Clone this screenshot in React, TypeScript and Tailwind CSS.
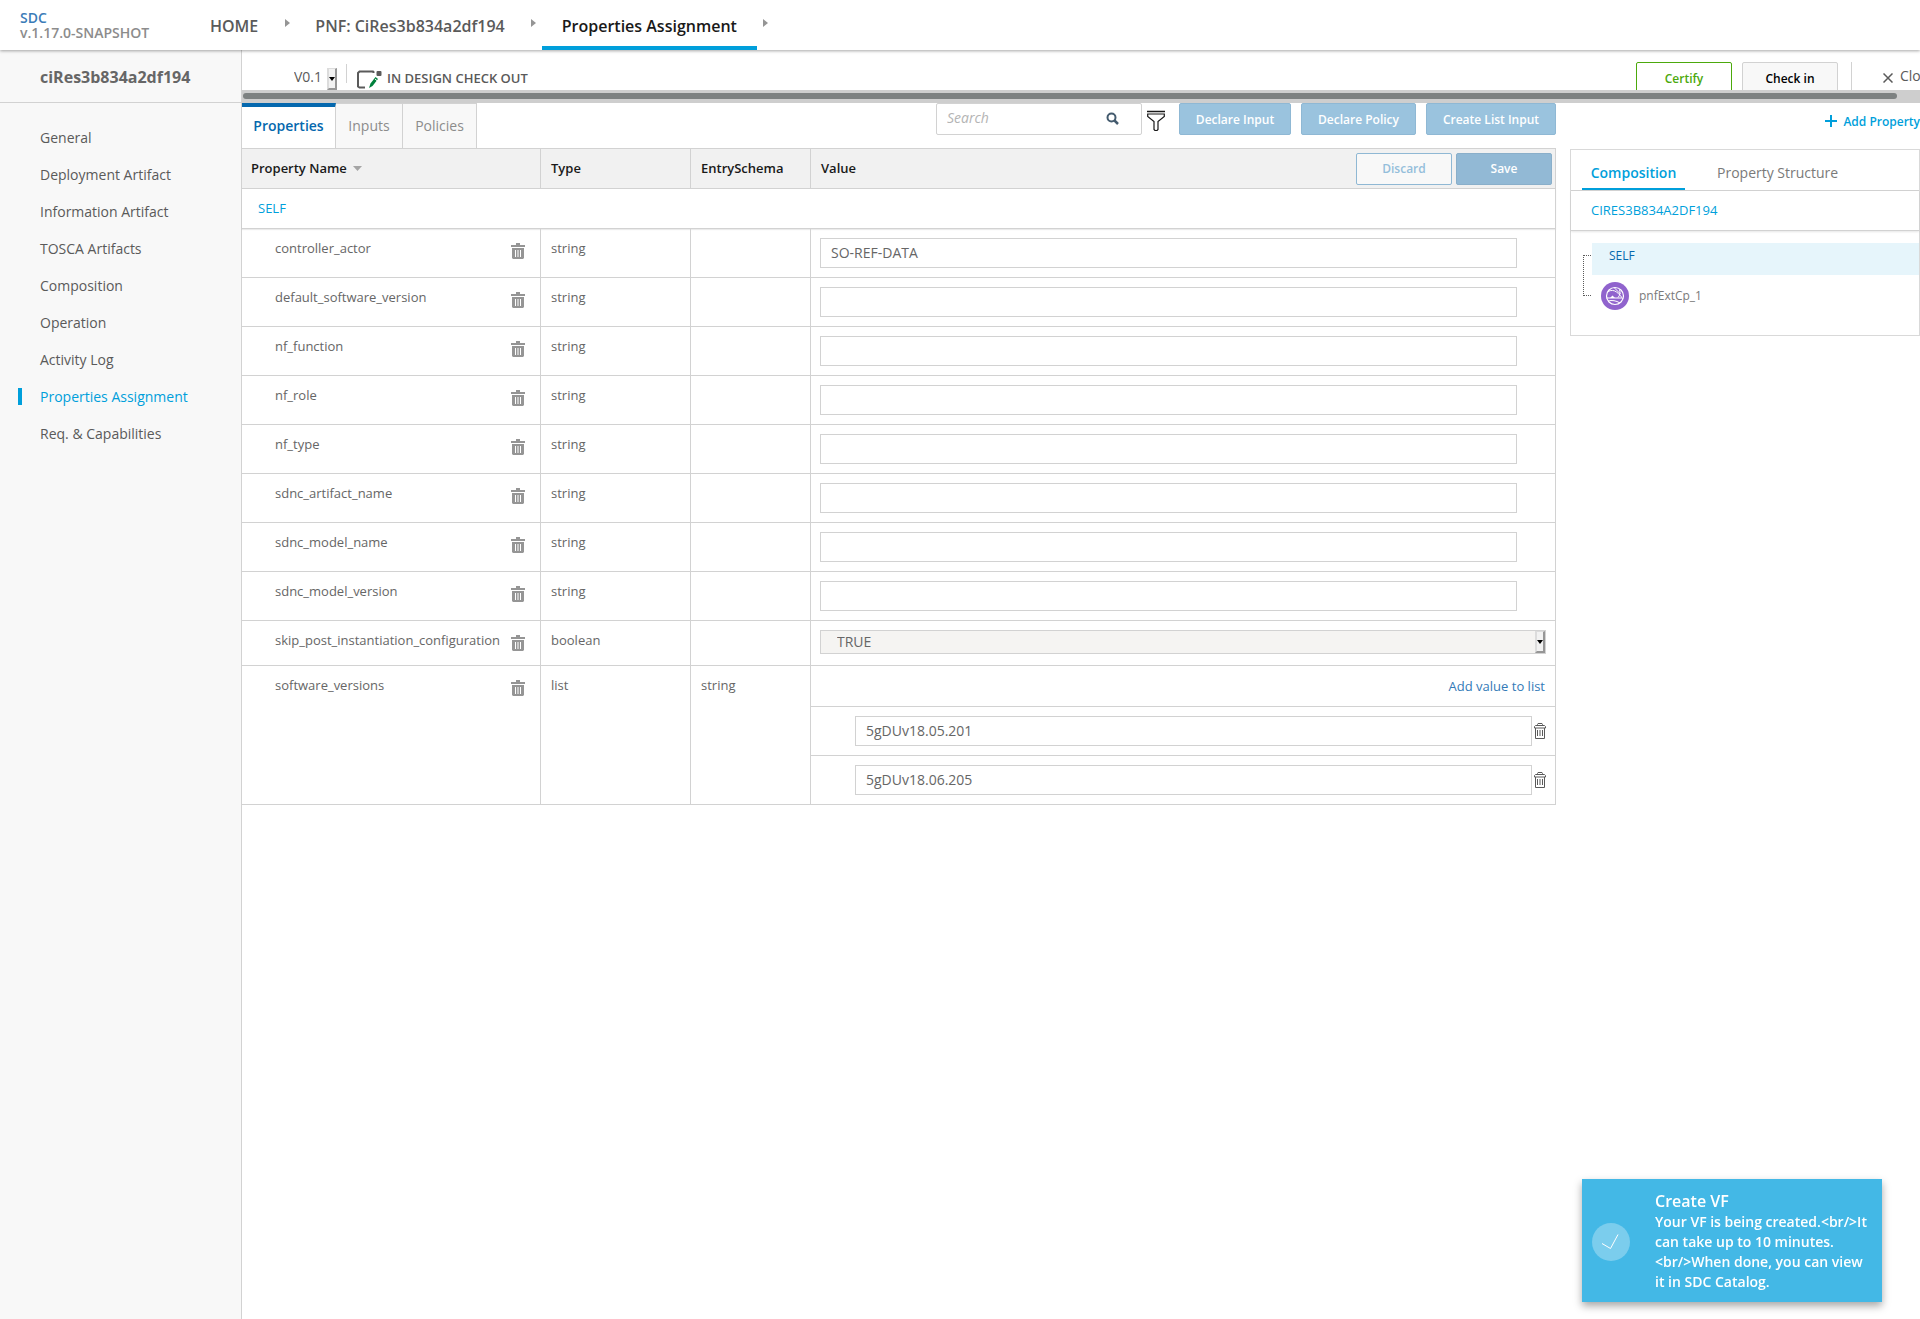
import React from "react";

const navItems = [
  "General",
  "Deployment Artifact",
  "Information Artifact",
  "TOSCA Artifacts",
  "Composition",
  "Operation",
  "Activity Log",
  "Properties Assignment",
  "Req. & Capabilities",
];

const textProperties = [
  { name: "controller_actor", value: "SO-REF-DATA" },
  { name: "default_software_version", value: "" },
  { name: "nf_function", value: "" },
  { name: "nf_role", value: "" },
  { name: "nf_type", value: "" },
  { name: "sdnc_artifact_name", value: "" },
  { name: "sdnc_model_name", value: "" },
  { name: "sdnc_model_version", value: "" },
];

const softwareVersions = ["5gDUv18.05.201", "5gDUv18.06.205"];

const cell = "border-b border-r border-[#d2d2d2] align-top";
const textCell = "border-b border-r border-[#d2d2d2] px-2.5 pt-[9px] align-top";
const field =
  "block h-[30px] border border-[#d2d2d2] bg-white px-2.5 pb-0.5 text-sm text-[#666666] outline-none";
const blueButton =
  "h-8 rounded-xs border border-[#8fb8d4] bg-[#9ac3de] pt-0.5 text-xs font-semibold text-white";

function TrashSolid() {
  return (
    <svg width="14" height="16" viewBox="0 0 14 16" fill="#959595" aria-hidden="true">
      <path d="M5 0h4v2h5v2H0V2h5z" />
      <path
        fillRule="evenodd"
        d="M1 5h12v10l-1 1H2l-1-1zM4 7v7h1V7zM6.500 7v7h1V7zM9 7v7h1V7z"
      />
    </svg>
  );
}

function TrashOutline() {
  return (
    <svg width="12" height="16" viewBox="0 0 12 16" fill="none" stroke="#5a5a5a" aria-hidden="true">
      <path d="M3.500 2.500V1.500L4 .500h4l.500 1v1M1.500 2.500h9l1 1v1.500H.500V3.500zM1.500 5v10.500h9V5M3.500 7v6M6 7v6M8.500 7v6" />
    </svg>
  );
}

function Crumb() {
  return (
    <svg width="5" height="8" viewBox="0 0 5 8" fill="#959595" className="-mt-1 shrink-0" aria-hidden="true">
      <path d="M0 0l5 4-5 4z" />
    </svg>
  );
}

function SelectArrow() {
  return (
    <span className="pointer-events-none absolute inset-y-px right-px flex w-2.5 items-center justify-center border-b-2 border-l-2 border-r-2 border-t border-b-[#969696] border-l-[#dcdcdc] border-r-[#969696] border-t-[#dcdcdc] bg-[#f2f2f2]">
      <svg width="6" height="4" viewBox="0 0 6 4" className="shrink-0" aria-hidden="true">
        <path d="M0 0h6L3 4z" fill="#000" />
      </svg>
    </span>
  );
}

function NameCell({ name }: { name: string }) {
  return (
    <td className={cell}>
      <div className="flex justify-between pl-[33px] pr-[15px]">
        <span className="pt-[9px] leading-5">{name}</span>
        <button type="button" aria-label={`Delete ${name}`} className="pt-3.5">
          <TrashSolid />
        </button>
      </div>
    </td>
  );
}

function TopBar() {
  return (
    <header className="relative z-10 flex h-[50px] shrink-0 bg-white shadow-[0_1px_3px_rgba(0,0,0,0.35)]">
      <div className="w-[188px] pl-5 pt-2.5 text-sm font-semibold leading-[15px] text-[#8c8c8c]">
        <a href="#sdc" className="block text-[#3b7cb8]">SDC</a>
        <span>v.1.17.0-SNAPSHOT</span>
      </div>
      <nav className="flex items-center text-base font-semibold text-[#5a5a5a]">
        <a href="#home" className="px-[22px] pt-0.5">HOME</a>
        <span className="ml-[5px] w-[5px]"><Crumb /></span>
        <a href="#pnf" className="pl-[25px] pr-[26px] pt-0.5">PNF: CiRes3b834a2df194</a>
        <span className="w-[5px]"><Crumb /></span>
        <a
          href="#properties"
          className="mx-1.5 flex h-full items-center border-b-4 border-[#009fdb] px-5 pt-1.5 text-[#191919]"
        >
          Properties Assignment
        </a>
        <Crumb />
      </nav>
    </header>
  );
}

function Sidebar() {
  return (
    <aside className="w-[242px] shrink-0 border-r border-[#d2d2d2] bg-[#f8f8f8]">
      <h1 className="flex h-[53px] items-center border-b border-[#d2d2d2] pl-10 pt-0.5 text-base font-bold text-[#666666]">
        ciRes3b834a2df194
      </h1>
      <ul className="pt-4 text-sm">
        {navItems.map((item) => {
          const active = item === "Properties Assignment";
          return (
            <li key={item} className="flex h-[37px] items-center pl-[18px]">
              <span className={active ? "h-[17px] w-1 bg-[#009fdb]" : "w-1"} />
              <a href="#menu" className={active ? "pl-[18px] text-[#009fdb]" : "pl-[18px] text-[#5a5a5a]"}>
                {item}
              </a>
            </li>
          );
        })}
      </ul>
    </aside>
  );
}

function VersionBar() {
  return (
    <div className="flex h-10 items-start overflow-hidden pl-[51px]">
      <div className="relative mt-[17px] h-6 w-[45px]">
        <select
          aria-label="Version"
          className="block h-5 w-full appearance-none bg-transparent pb-px pl-px text-sm leading-[19px] text-[#5a5a5a] outline-none"
        >
          <option>V0.1</option>
        </select>
        <SelectArrow />
      </div>
      <span className="ml-2 mt-3.5 h-[19px] w-px bg-[#d2d2d2]" />
      <svg width="25" height="19" viewBox="0 0 25 19" className="ml-2.5 mt-5 shrink-0" fill="none" aria-hidden="true">
        <path d="M16.500 3V2L16 1.500H2.500L1 3v13.500L2.500 17.500H8" stroke="#5a5a5a" strokeWidth="2" />
        <rect x="19.500" y="1" width="5" height="5" rx="1" fill="#5a5a5a" />
        <path d="M12 18l1.500-4.500 5-6.500 2.500 2-5.500 7z" fill="#00803c" />
        <path d="M18 9l2.500 2" stroke="#fff" />
      </svg>
      <span className="ml-[5px] mt-[18px] whitespace-nowrap text-[13px] font-semibold leading-5 text-[#5a5a5a]">
        IN DESIGN CHECK OUT
      </span>
      <div className="ml-auto flex w-[284px] shrink-0 pt-3">
        <button type="button" className="h-8 w-24 shrink-0 rounded-xs border border-[#4ca90c] pt-0.5 text-xs font-semibold text-[#4ca90c]">
          Certify
        </button>
        <button type="button" className="ml-2.5 h-8 w-24 shrink-0 rounded-xs border border-[#d2d2d2] bg-[#f8f8f8] pt-0.5 text-xs font-semibold text-black">
          Check in
        </button>
        <span className="ml-[13px] h-8 w-px shrink-0 bg-[#d2d2d2]" />
        <button type="button" className="ml-[31px] flex h-7 shrink-0 items-center text-sm text-[#5a5a5a]">
          <svg width="10" height="10" viewBox="0 0 10 10" className="mt-1" stroke="#5a5a5a" strokeWidth="1.500" aria-hidden="true">
            <path d="M.500.500l9 9M9.500.500l-9 9" />
          </svg>
          <span className="pl-[7px]">Close</span>
        </button>
      </div>
    </div>
  );
}

function Toolbar() {
  return (
    <div className="flex h-[45px] items-start">
      <div role="tablist" className="flex h-full text-sm">
        <button type="button" role="tab" aria-selected="true" className="w-[94px] border-r border-t-4 border-r-[#d2d2d2] border-t-[#0568ae] pb-1 font-semibold text-[#0568ae]">
          Properties
        </button>
        <button type="button" role="tab" aria-selected="false" className="w-[67px] border-r border-t border-[#d2d2d2] bg-[#f8f8f8] text-[#8c8c8c]">
          Inputs
        </button>
        <button type="button" role="tab" aria-selected="false" className="w-[74px] border-r border-t border-[#d2d2d2] bg-[#f8f8f8] text-[#8c8c8c]">
          Policies
        </button>
      </div>
      <div className="ml-auto flex h-8 w-[206px] items-center rounded-xs border border-[#d2d2d2] pr-[22px]">
        <input
          aria-label="Search"
          placeholder="Search"
          className="w-0 flex-1 bg-transparent pb-0.5 pl-2.5 text-sm italic outline-none placeholder:text-[#b4b4b4]"
        />
        <svg width="13" height="13" viewBox="0 0 13 13" fill="none" stroke="#445b6e" className="-mt-0.5" aria-hidden="true">
          <circle cx="5.500" cy="5.500" r="4" strokeWidth="2" />
          <path d="M8.500 8.500l3.500 3.500" strokeWidth="2.500" />
        </svg>
      </div>
      <button type="button" aria-label="Filter" className="ml-[5px] mt-[7px]">
        <svg width="18" height="21" viewBox="0 0 18 21" fill="none" stroke="#191919" aria-hidden="true">
          <path d="M0 1.500h18" strokeWidth="1.500" />
          <path d="M.7 4h16.600v2.500L11 11.500v8l-1 1H8l-1-1v-8L.7 6.500z" strokeWidth="1.200" />
        </svg>
      </button>
      <div className="ml-3.5 flex gap-2.5">
        <button type="button" className={`${blueButton} w-[112px]`}>Declare Input</button>
        <button type="button" className={`${blueButton} w-[115px]`}>Declare Policy</button>
        <button type="button" className={`${blueButton} w-[130px]`}>Create List Input</button>
      </div>
    </div>
  );
}

function PropertiesTable() {
  return (
    <table className="w-full table-fixed border-separate border-spacing-0 border-t border-[#d2d2d2] text-[13px] leading-5 text-[#666666]">
      <colgroup>
        <col className="w-[299px]" />
        <col className="w-[150px]" />
        <col className="w-[120px]" />
        <col />
      </colgroup>
      <thead>
        <tr className="h-10 bg-[#f1f1f1] text-left text-[#191919]">
          <th className="border-b border-r border-[#d2d2d2] pb-0.5 pl-[9px] font-semibold">
            <span className="flex items-center gap-1.5">
              Property Name
              <svg width="9" height="5" viewBox="0 0 9 5" fill="#a5a5a5" className="mt-0.5" aria-hidden="true">
                <path d="M0 0h9L4.500 5z" />
              </svg>
            </span>
          </th>
          <th className="border-b border-r border-[#d2d2d2] pb-0.5 pl-2.5 font-semibold">Type</th>
          <th className="border-b border-r border-[#d2d2d2] pb-0.5 pl-2.5 font-semibold">EntrySchema</th>
          <th className="border-b border-r border-[#d2d2d2] py-0 pl-2.5 pr-[3px] font-semibold">
            <div className="flex items-center gap-1">
              <span className="mr-auto pb-0.5">Value</span>
              <button type="button" className="h-8 w-24 rounded-xs border border-[#8fb8d4] bg-[#f8f8f8] text-xs font-semibold text-[#94bedb]">
                Discard
              </button>
              <button type="button" className="h-8 w-24 rounded-xs border border-[#8aafca] bg-[#92b9d5] text-xs font-semibold text-white">
                Save
              </button>
            </div>
          </th>
        </tr>
      </thead>
      <tbody>
        <tr className="h-10">
          <td colSpan={4} className="border-b border-r border-[#d2d2d2] pb-0.5 pl-4 text-[#009fdb] shadow-[0_1px_1px_rgba(0,0,0,0.08)]">
            SELF
          </td>
        </tr>
        {textProperties.map((p) => (
          <tr key={p.name}>
            <NameCell name={p.name} />
            <td className={textCell}>string</td>
            <td className={textCell} />
            <td className={`${cell} py-[9px] pl-[9px] pr-[38px]`}>
              <input aria-label={p.name} defaultValue={p.value} className={`${field} w-full`} />
            </td>
          </tr>
        ))}
        <tr>
          <NameCell name="skip_post_instantiation_configuration" />
          <td className={textCell}>boolean</td>
          <td className={textCell} />
          <td className={`${cell} pb-[11px] pl-[9px] pr-[9px] pt-[9px]`}>
            <div className="relative h-6">
              <select
                aria-label="skip_post_instantiation_configuration"
                className="block h-6 w-full appearance-none border border-[#d2d2d2] bg-[#f5f4f2] px-4 text-sm leading-[22px] outline-none"
              >
                <option>TRUE</option>
                <option>FALSE</option>
              </select>
              <SelectArrow />
            </div>
          </td>
        </tr>
        <tr>
          <NameCell name="software_versions" />
          <td className={textCell}>list</td>
          <td className={textCell}>string</td>
          <td className={cell}>
            <div className="flex h-10 items-center justify-end pr-2.5">
              <a href="#add" className="text-[#337ab7]">Add value to list</a>
            </div>
            {softwareVersions.map((v) => (
              <div key={v} className="flex items-center gap-0.5 border-t border-[#d2d2d2] py-[9px] pl-11 pr-[9px]">
                <input aria-label="software version" defaultValue={v} className={`${field} w-0 flex-1`} />
                <button type="button" aria-label={`Delete ${v}`}>
                  <TrashOutline />
                </button>
              </div>
            ))}
          </td>
        </tr>
      </tbody>
    </table>
  );
}

function CompositionPanel() {
  return (
    <section className="w-[350px] shrink-0">
      <div className="flex h-[46px] justify-end">
        <button type="button" className="flex h-9 items-center gap-1.5 whitespace-nowrap text-xs font-semibold text-[#009fdb]">
          <svg width="12" height="12" viewBox="0 0 12 12" stroke="#009fdb" strokeWidth="2" aria-hidden="true">
            <path d="M0 6h12M6 0v12" />
          </svg>
          <span className="pt-0.5">Add Property</span>
        </button>
      </div>
      <div className="h-[187px] border border-[#d9d9d9]">
        <div role="tablist" className="flex h-[41px] border-b border-[#d2d2d2] pl-[11px] text-sm text-[#7a7a7a]">
          <button type="button" role="tab" aria-selected="true" className="w-[103px] border-b-2 border-[#009fdb] pt-2 font-semibold text-[#009fdb]">
            Composition
          </button>
          <button type="button" role="tab" aria-selected="false" className="ml-8 pt-1.5">
            Property Structure
          </button>
        </div>
        <div className="flex h-10 items-center border-b border-[#d2d2d2] pl-5 text-[13px] text-[#009fdb] shadow-[0_1px_2px_rgba(0,0,0,0.1)]">
          CIRES3B834A2DF194
        </div>
        <div className="flex pl-3 pt-3 text-xs">
          <div className="mt-3 h-[41px] w-2 shrink-0 border-y border-l border-dotted border-[#5a5a5a]" />
          <div className="ml-px flex-1">
            <div className="h-8 bg-[#e6f5fb] pl-[17px] leading-[25px] text-[#0568ae]">SELF</div>
            <div className="flex h-[42px] items-center gap-2.5 pl-[9px] text-[#7a7a7a]">
              <svg width="28" height="28" viewBox="0 0 28 28" fill="none" stroke="#fff" aria-hidden="true">
                <circle cx="14" cy="14" r="14" fill="#9063cd" stroke="none" />
                <circle cx="14" cy="14" r="8.500" strokeWidth="1.200" />
                <path d="M7 9.500c3-1.500 6-1.500 8.500.5 3 2.200 5 4.500 6 7" />
                <path d="M13 5.500l6.500 6.500M18.500 7.500c1 3 .500 6-1.500 8" />
                <path d="M5.500 16h15M7 19c4-1 8-.500 12 2" />
                <path d="M11.500 13.500l2.500 2.500H9z" fill="#fff" stroke="none" />
              </svg>
              <span>pnfExtCp_1</span>
            </div>
          </div>
        </div>
      </div>
    </section>
  );
}

function Toast() {
  return (
    <div
      role="status"
      className="fixed bottom-[17px] right-[38px] z-20 flex w-[300px] items-center bg-[#43b8e6] px-2.5 pb-2.5 pt-3 font-semibold text-white shadow-[0_4px_8px_rgba(0,0,0,0.35)]"
    >
      <svg width="38" height="38" viewBox="0 0 38 38" fill="none" className="shrink-0" aria-hidden="true">
        <circle cx="19" cy="19" r="19" fill="#7bcded" />
        <path d="M10 20.500l8.500 5 7.500-14" stroke="#fff" />
      </svg>
      <div className="ml-[25px] w-[216px] text-sm leading-5">
        <h2 className="text-base font-semibold leading-[21px]">Create VF</h2>
        <p>{"Your VF is being created.<br/>It can take up to 10 minutes. <br/>When done, you can view it in SDC Catalog."}</p>
      </div>
    </div>
  );
}

export default function App() {
  return (
    <div className="flex min-h-screen flex-col overflow-hidden bg-white font-['Open_Sans',sans-serif]">
      <TopBar />
      <div className="flex flex-1">
        <Sidebar />
        <main className="min-w-0 flex-1">
          <VersionBar />
          <div className="h-[13px] bg-[#cecece] pl-px pr-[23px] pt-[3px]">
            <div className="h-1.5 rounded-full bg-[#7d8181]" />
          </div>
          <div className="flex gap-3.5">
            <div className="min-w-0 flex-1">
              <Toolbar />
              <PropertiesTable />
            </div>
            <CompositionPanel />
          </div>
        </main>
      </div>
      <Toast />
    </div>
  );
}
